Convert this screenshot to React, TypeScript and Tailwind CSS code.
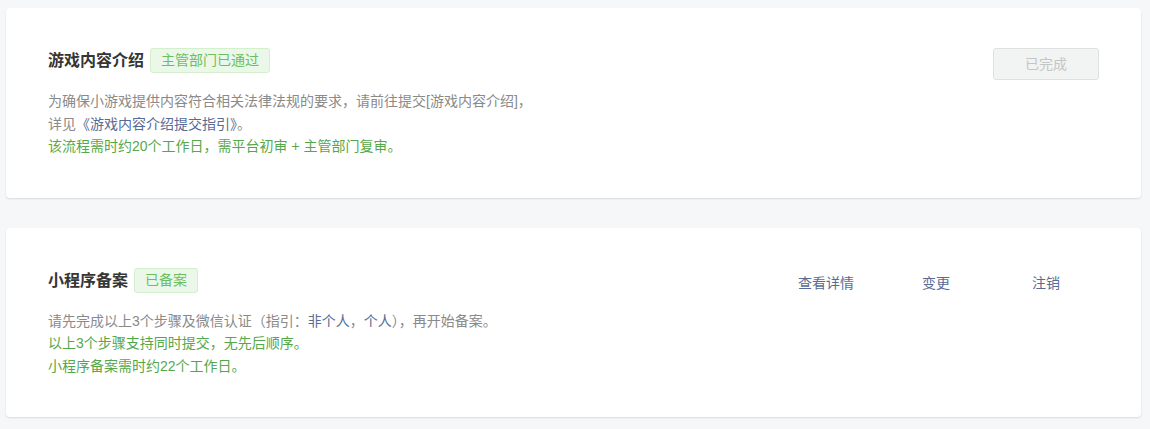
import React from 'react';

const Badge: React.FC<{ children: React.ReactNode }> = ({ children }) => (
  <span className="ml-[6px] inline-block rounded-[3px] border border-[#d3efcc] bg-[#ebf7e8] px-[10px] text-[14px] leading-[23px] text-[#6cbf5f]">
    {children}
  </span>
);

export default function App() {
  return (
    <div
      className="min-h-[429px] bg-[#f6f7f9] pl-[6px] pr-[9px] pt-[8px]"
      style={{ fontFamily: '"Liberation Sans", "Noto Sans CJK SC", sans-serif' }}
    >
      {/* 游戏内容介绍 */}
      <div className="rounded-[4px] bg-white px-[42px] pb-[40px] pt-[40px] shadow-[0_1px_2px_rgba(0,0,0,0.12)]">
        <div className="flex items-start justify-between">
          <div>
            <div className="flex items-center">
              <span className="text-[16px] font-bold leading-[25px] text-[#353535]">游戏内容介绍</span>
              <Badge>主管部门已通过</Badge>
            </div>
            <div className="mt-[17px] text-[14px] leading-[22.5px]">
              <p className="text-[#8a8a8a]">为确保小游戏提供内容符合相关法律法规的要求，请前往提交[游戏内容介绍]，</p>
              <p className="text-[#8a8a8a]">
                详见<span className="text-[#576b95]">《游戏内容介绍提交指引》</span>。
              </p>
              <p className="text-[#55a84a]">该流程需时约20个工作日，需平台初审 + 主管部门复审。</p>
            </div>
          </div>
          <button className="h-[32px] w-[106px] rounded-[3px] border border-[#dfe1e1] bg-[#f2f3f3] text-[14px] text-[#c4c6c6]">
            已完成
          </button>
        </div>
      </div>

      {/* 小程序备案 */}
      <div className="mt-[30px] rounded-[4px] bg-white pb-[40px] pl-[42px] pr-[40px] pt-[40px] shadow-[0_1px_2px_rgba(0,0,0,0.12)]">
        <div className="flex items-start justify-between">
          <div>
            <div className="flex items-center">
              <span className="text-[16px] font-bold leading-[25px] text-[#353535]">小程序备案</span>
              <Badge>已备案</Badge>
            </div>
            <div className="mt-[17px] text-[14px] leading-[22.5px]">
              <p className="text-[#8a8a8a]">
                请先完成以上3个步骤及微信认证（指引：<span className="text-[#576b95]">非个人</span>，
                <span className="text-[#576b95]">个人</span>），再开始备案。
              </p>
              <p className="text-[#55a84a]">以上3个步骤支持同时提交，无先后顺序。</p>
              <p className="text-[#55a84a]">小程序备案需时约22个工作日。</p>
            </div>
          </div>
          <div className="flex text-[14px] leading-[30px] text-[#576b95]">
            <span className="w-[110px] text-center">查看详情</span>
            <span className="w-[110px] text-center">变更</span>
            <span className="w-[110px] text-center">注销</span>
          </div>
        </div>
      </div>
    </div>
  );
}
